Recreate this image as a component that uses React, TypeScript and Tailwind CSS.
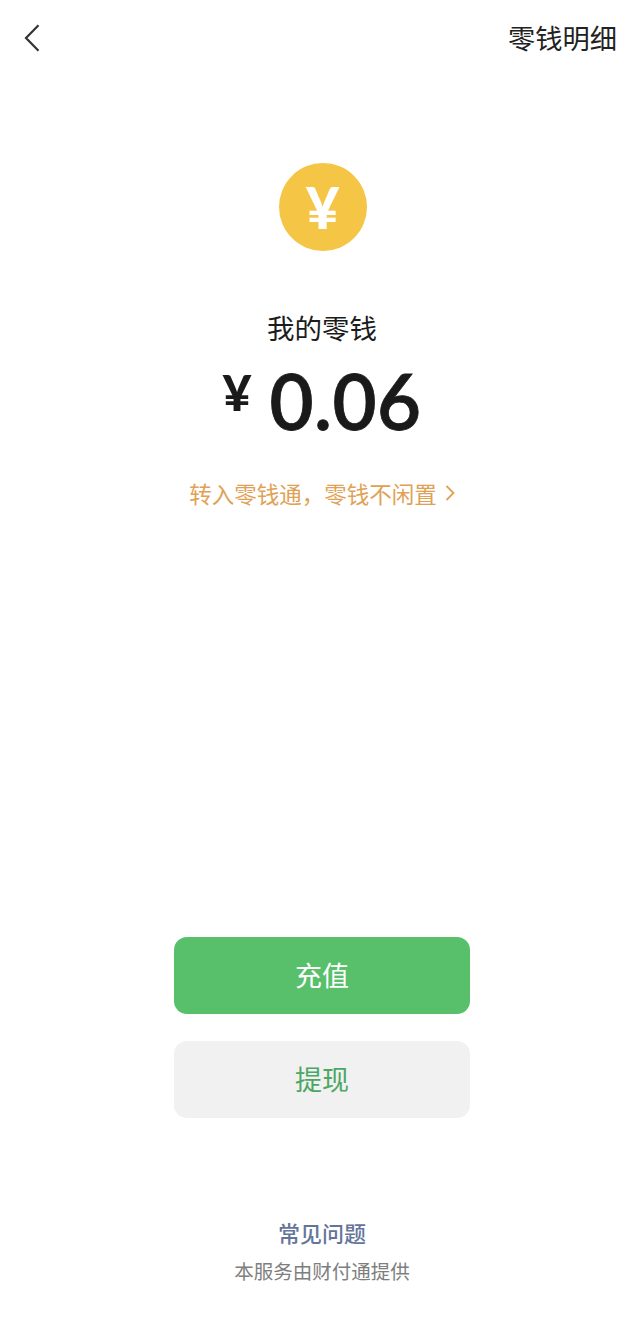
const cjk = "font-['Noto_Sans_CJK_SC','Noto_Sans',sans-serif]";

export default function App() {
  return (
    <div className={`flex h-[1322px] w-[644px] flex-col items-center overflow-hidden bg-white ${cjk}`}>
      {/* Top bar */}
      <div className="flex h-[76px] w-full items-center justify-between pl-[24px] pr-[27px]">
        <svg width="16" height="28" viewBox="0 0 16 28" fill="none" stroke="#333333" strokeWidth="2.2">
          <path d="M14.5 1.2 2 14 14.5 26.8" />
        </svg>
        <span className="text-[27.25px] leading-none text-[#222222]">零钱明细</span>
      </div>

      {/* Balance */}
      <div className="ml-[1px] mt-[87px] flex h-[88px] w-[88px] items-center justify-center rounded-full bg-[#f5c545]">
        <span className="font-['Lato',sans-serif] text-[58px] font-black leading-none text-white">¥</span>
      </div>
      <div className="mt-[58px] text-[27.5px] leading-[36px] text-[#1c1c1c]">我的零钱</div>
      <div className="mt-[16px] flex h-[80px] items-center font-['Lato',sans-serif] font-semibold leading-none text-[#1a1a1a]">
        <span className="mr-[18px] -mt-[18px] text-[50px] font-black">¥</span>
        <span className="text-[76px] tracking-[0.5px] [-webkit-text-stroke:0.8px_#1a1a1a]">0.06</span>
      </div>
      <div className="mt-[38px] flex h-[28px] items-center text-[22.5px] leading-none text-[#e0a155]">
        转入零钱通，零钱不闲置
        <svg className="ml-[8px]" width="10" height="16" viewBox="0 0 10 16" fill="none" stroke="#e0a155" strokeWidth="1.8">
          <path d="M1.5 1 8.5 8 1.5 15" />
        </svg>
      </div>

      {/* Actions */}
      <button className="mt-[430px] flex h-[77px] w-[296px] items-center justify-center rounded-[13px] bg-[#58bf6b] text-[27px] text-white">
        充值
      </button>
      <button className="mt-[27px] flex h-[77px] w-[296px] items-center justify-center rounded-[13px] bg-[#f1f1f1] text-[27px] text-[#4ba763]">
        提现
      </button>

      {/* Footer */}
      <div className="mt-[99px] text-[22px] font-medium leading-[30px] text-[#65759a]">常见问题</div>
      <div className="mt-[10px] text-[19.5px] leading-[28px] text-[#7e7e7e]">本服务由财付通提供</div>
    </div>
  );
}
